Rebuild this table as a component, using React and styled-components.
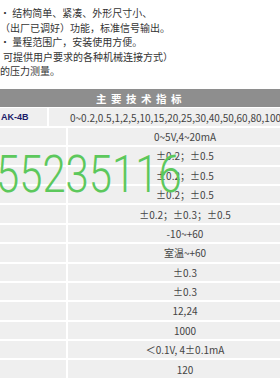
import styled, { createGlobalStyle } from "styled-components";

const GlobalStyle = createGlobalStyle`
  html, body {
    margin: 0;
    padding: 0;
    background: #ffffff;
    overflow: hidden;
  }
  body {
    font-family: "Noto Sans CJK SC", "Noto Sans", sans-serif;
  }
`;

const intro = [
  "• 结构简单、紧凑、外形尺寸小、",
  "（出厂已调好）功能，标准信号输出。",
  "• 量程范围广，安装使用方便。",
  "可提供用户要求的各种机械连接方式）",
  "的压力测量。",
];

const specs = [
  "0~5V,4~20mA",
  "±0.2；±0.5",
  "±0.2；±0.5",
  "±0.2；±0.5",
  "±0.2；±0.3；±0.5",
  "-10~+60",
  "室温~+60",
  "±0.3",
  "±0.3",
  "12,24",
  "1000",
  "＜0.1V, 4±0.1mA",
  "120",
  "",
];

export default function App() {
  return (
    <>
      <GlobalStyle />
      <Page>
        <Intro>
          {intro.map((line, i) => (
            <IntroLine key={i} $indent={i === 3}>
              {line}
            </IntroLine>
          ))}
        </Intro>
        <SpecTable>
          <HeaderCell>主要技术指标</HeaderCell>
          <ModelCell>AK-4B</ModelCell>
          <ValueCell $wide>0~0.2,0.5,1,2,5,10,15,20,25,30,40,50,60,80,100</ValueCell>
          {specs.map((value, i) => (
            <Row key={i}>
              <LabelCell />
              <ValueCell>{value}</ValueCell>
            </Row>
          ))}
        </SpecTable>
        <Watermark>55235116</Watermark>
      </Page>
    </>
  );
}

const Page = styled.div`
  position: relative;
  width: 302px;
  height: 380px;
  overflow: hidden;
`;

const Intro = styled.div`
  padding: 6px 0 0;
  height: 83px;
  box-sizing: border-box;
`;

const IntroLine = styled.div`
  font-size: 10px;
  line-height: 14.5px;
  color: #333333;
  white-space: nowrap;
  padding-left: ${({ $indent }) => ($indent ? "3px" : "0")};
`;

const SpecTable = styled.div`
  display: grid;
  grid-template-columns: 47px 17px 234px;
  grid-auto-rows: 17.4px;
  gap: 2px;
  margin-top: 6px;
`;

const Row = styled.div`
  display: contents;
`;

const HeaderCell = styled.div`
  grid-column: 1 / 4;
  height: 18px;
  background: #8e8e8e;
  color: #ffffff;
  font-size: 10.5px;
  font-weight: bold;
  letter-spacing: 4.5px;
  display: flex;
  align-items: center;
  justify-content: center;
  padding-right: 20px;
`;

const Cell = styled.div`
  background: #efefef;
  display: flex;
  align-items: center;
  white-space: nowrap;
  overflow: hidden;
`;

const ModelCell = styled(Cell)`
  grid-column: 1 / 2;
  color: #1b1b6a;
  font-family: "Liberation Sans", sans-serif;
  font-weight: bold;
  font-size: 9px;
  padding-left: 1px;
`;

const LabelCell = styled(Cell)`
  grid-column: 1 / 3;
`;

const ValueCell = styled(Cell)`
  grid-column: ${({ $wide }) => ($wide ? "2 / 4" : "3 / 4")};
  justify-content: center;
  font-size: 10px;
  color: #444444;
`;

const Watermark = styled.div`
  position: absolute;
  top: 149px;
  left: -4px;
  font-family: Roboto, "Liberation Sans", sans-serif;
  font-weight: 300;
  font-size: 51px;
  line-height: 1;
  color: #5cc85c;
  transform: scaleX(0.82);
  transform-origin: left top;
  white-space: nowrap;
  pointer-events: none;
`;
